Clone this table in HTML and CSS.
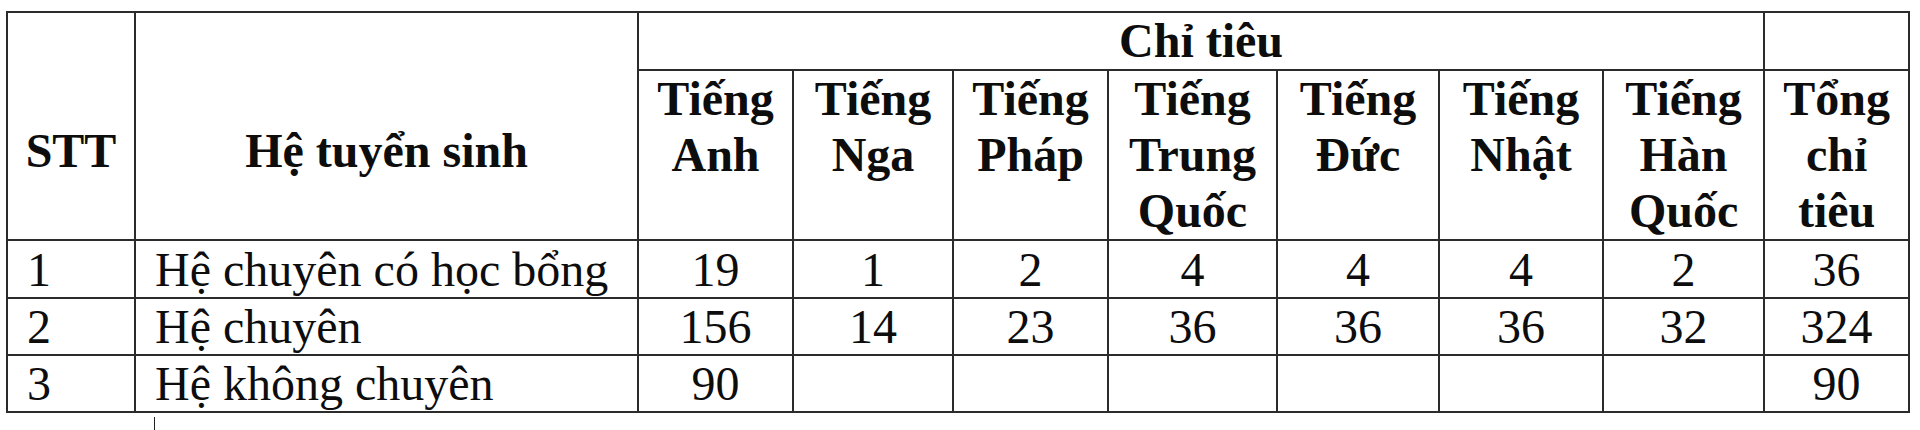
FILE: index.html
```html
<!DOCTYPE html>
<html lang="vi">
<head>
<meta charset="utf-8">
<title>Chỉ tiêu tuyển sinh</title>
<link rel="stylesheet" href="styles.css">
</head>
<body>
<div class="page">
  <table class="quota">
    <colgroup>
      <col class="c-stt">
      <col class="c-he">
      <col class="c-anh">
      <col class="c-nga">
      <col class="c-phap">
      <col class="c-trung">
      <col class="c-duc">
      <col class="c-nhat">
      <col class="c-han">
      <col class="c-tong">
    </colgroup>
    <thead>
      <tr class="r-top">
        <th rowspan="2" class="th-side">STT</th>
        <th rowspan="2" class="th-side">Hệ tuyển sinh</th>
        <th colspan="7" class="th-group">Chỉ tiêu</th>
        <th class="th-empty"></th>
      </tr>
      <tr class="r-sub">
        <th class="th-lang">Tiếng<br>Anh</th>
        <th class="th-lang">Tiếng<br>Nga</th>
        <th class="th-lang">Tiếng<br>Pháp</th>
        <th class="th-lang">Tiếng<br>Trung<br>Quốc</th>
        <th class="th-lang">Tiếng<br>Đức</th>
        <th class="th-lang">Tiếng<br>Nhật</th>
        <th class="th-lang">Tiếng<br>Hàn<br>Quốc</th>
        <th class="th-lang">Tổng<br>chỉ<br>tiêu</th>
      </tr>
    </thead>
    <tbody>
      <tr class="r-1">
        <td class="td-left">1</td>
        <td class="td-left">Hệ chuyên có học bổng</td>
        <td>19</td><td>1</td><td>2</td><td>4</td><td>4</td><td>4</td><td>2</td><td>36</td>
      </tr>
      <tr class="r-2">
        <td class="td-left">2</td>
        <td class="td-left">Hệ chuyên</td>
        <td>156</td><td>14</td><td>23</td><td>36</td><td>36</td><td>36</td><td>32</td><td>324</td>
      </tr>
      <tr class="r-3">
        <td class="td-left">3</td>
        <td class="td-left">Hệ không chuyên</td>
        <td>90</td><td></td><td></td><td></td><td></td><td></td><td></td><td>90</td>
      </tr>
    </tbody>
  </table>
  <div class="cursor"></div>
</div>
</body>
</html>
```
FILE: styles.css
```css
html, body {
  margin: 0;
  padding: 0;
  background: #ffffff;
}

.page {
  padding: 11px 0 0 6px;
  font-family: "Liberation Serif", "Times New Roman", serif;
  color: #0d0d0d;
}

.quota {
  border-collapse: collapse;
  table-layout: fixed;
  width: 1904px;
}

.c-stt { width: 128px; }
.c-he { width: 503px; }
.c-anh { width: 155px; }
.c-nga { width: 160px; }
.c-phap { width: 155px; }
.c-trung { width: 169px; }
.c-duc { width: 162px; }
.c-nhat { width: 164px; }
.c-han { width: 161px; }
.c-tong { width: 145px; }

.quota th,
.quota td {
  border: 2px solid #2b2b2b;
  padding: 0;
  text-align: center;
  overflow: hidden;
  white-space: nowrap;
}

.quota th {
  font-weight: bold;
  font-size: 48px;
  line-height: 56px;
  vertical-align: top;
}

.quota td {
  font-size: 48px;
  line-height: 55px;
  vertical-align: middle;
}

.r-top { height: 58px; }
.r-sub { height: 167px; }
.r-1 { height: 58px; }
.r-2 { height: 57px; }
.r-3 { height: 57px; }

.quota th.th-side {
  padding-top: 110px;
}

.quota td.td-left {
  text-align: left;
  padding-left: 19px;
}

.cursor {
  width: 1px;
  height: 17px;
  margin: 4px 0 0 148px;
  background: #222;
}
```
